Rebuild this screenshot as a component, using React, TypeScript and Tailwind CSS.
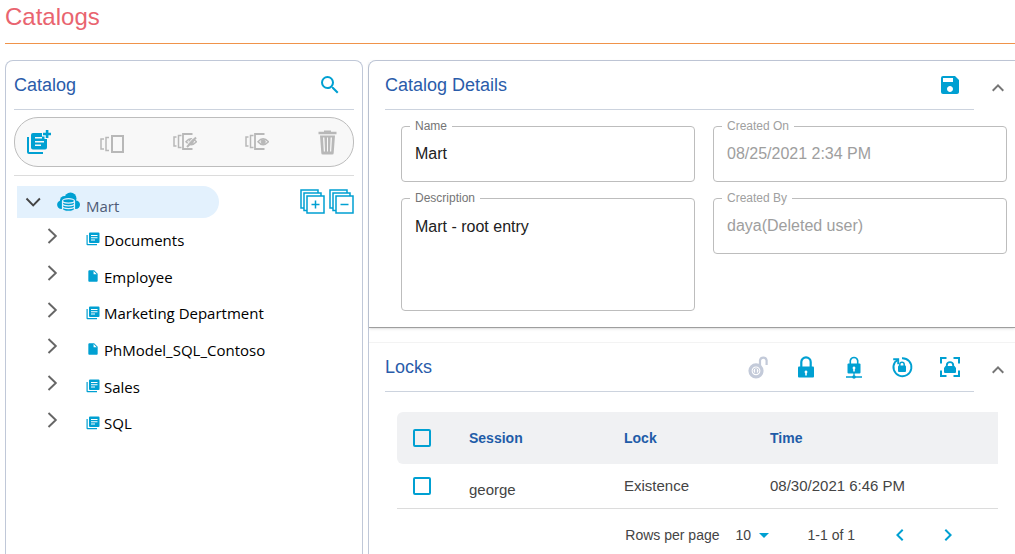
import React, { useState } from "react";
import { MdSearch, MdSave, MdExpandLess, MdArrowDropDown, MdChevronLeft, MdChevronRight, MdInsertDriveFile } from "react-icons/md";

function AddCatalogIcon() {
  return (
    <svg width="24" height="24" viewBox="0 0 24 24" fill="currentColor" aria-hidden="true">
      <path d="M0 7h2v15h14v2H2a2 2 0 0 1-2-2z" />
      <path fillRule="evenodd" d="M6 3h9v3.500h2.500V9H20v8.500a2 2 0 0 1-2 2H6a2 2 0 0 1-2-2V5a2 2 0 0 1 2-2zM8 7v1.500h7V7zM8 11v1.500h9V11zM8 14.500V16h6v-1.500z" />
      <path d="M18.800 0h2.600v2.700H24v2.600h-2.600V8h-2.600V5.300H16V2.700h2.800z" />
    </svg>
  );
}

function VersionIcon({ kind }: { kind: "plain" | "hidden" | "shown" }) {
  return (
    <svg width="24" height="18" viewBox="0 0 24 18" fill="none" stroke="currentColor" aria-hidden="true">
      {kind === "plain" ? (
        <>
          <path d="M4 4H1v10h3M9 2.500H6v13h3" strokeWidth="1.500" />
          <path d="M12 1h11v16H12z" strokeWidth="2" />
        </>
      ) : (
        <>
          <path d="M3.500 4H1v9h2.500M8.500 2.500h-3v12h3" strokeWidth="1.500" />
          <path d="M19.500 1H10v15h9.500" strokeWidth="1.800" />
          <path d="M13 8.800q5-6 10.500 0-5.500 6-10.500 0z" strokeWidth="1.500" />
          <circle cx="18.200" cy="8.800" r="2.100" fill="currentColor" />
          {kind === "hidden" && (
            <>
              <path d="M14 14l9-9.500" strokeWidth="2" />
              <path d="M13.300 12.300l8-8.500" stroke="#f8f8f8" strokeWidth="1" />
            </>
          )}
        </>
      )}
    </svg>
  );
}

function TrashIcon() {
  return (
    <svg width="19" height="25" viewBox="0 0 19 25" fill="currentColor" aria-hidden="true">
      <path d="M6 0.500h7v1.200h5.500v2.600H0.500V1.700H6z" />
      <path fillRule="evenodd" d="M2 5.500h15l-1.300 17.500a1.500 1.500 0 0 1-1.500 1.500H4.800A1.500 1.500 0 0 1 3.300 23zM5 7.500l.8 14h1.200l-.6-14zM9 7.500v14h1v-14zM12.600 7.500l-.6 14h1.200l.8-14z" />
    </svg>
  );
}

function CloudDbIcon() {
  return (
    <svg width="23" height="20" viewBox="0 0 23 20" aria-hidden="true">
      <g fill="#00a0d2">
        <circle cx="4.300" cy="12.800" r="4.200" />
        <circle cx="7.500" cy="8.500" r="4.500" />
        <circle cx="13.500" cy="6.500" r="6" />
        <circle cx="18.800" cy="12.800" r="4.200" />
        <path d="M4 8h15v9H4z" />
      </g>
      <path d="M5.500 9v8c0 3.200 12 3.200 12 0V9c0-3.200-12-3.200-12 0z" fill="#00a0d2" stroke="#e3f1fd" strokeWidth="1.200" />
      <path d="M5.500 9c0 2.700 12 2.700 12 0M5.500 11.800c0 2.700 12 2.700 12 0M5.500 14.600c0 2.700 12 2.700 12 0" fill="none" stroke="#e3f1fd" strokeWidth="1.200" />
    </svg>
  );
}

function FolderIcon() {
  return (
    <svg width="14" height="14" viewBox="0 0 14 14" fill="currentColor" aria-hidden="true">
      <path d="M0.500 3h1.200v9h9.300v1.300H1.500a1 1 0 0 1-1-1z" />
      <path fillRule="evenodd" d="M4 0.500h8.500a1 1 0 0 1 1 1V10a1 1 0 0 1-1 1H4a1 1 0 0 1-1-1V1.500a1 1 0 0 1 1-1zM5 3v1h6.500V3zM5 5.200v1h6.500v-1zM5 7.500v1h4v-1z" />
    </svg>
  );
}

function StackIcon({ minus }: { minus?: boolean }) {
  return (
    <svg width="25" height="25" viewBox="0 0 25 25" fill="none" stroke="currentColor" strokeWidth="1.500" aria-hidden="true">
      <path d="M4 19H1V1h17v3" />
      <path d="M7 21.500H4V4h17v3" />
      <path d="M7 7h17v17H7z" />
      <path d={minus ? "M11.500 15.500h8" : "M11.500 15.500h8M15.500 11.500v8"} />
    </svg>
  );
}

function Chevron({ down }: { down?: boolean }) {
  return (
    <svg width="16" height="16" viewBox="0 0 16 16" fill="none" stroke={down ? "#444" : "#666"} strokeWidth="1.900" aria-hidden="true">
      <path d={down ? "M1.500 4.500l6.700 7 6.700-7" : "M4.500 1l7.300 7-7.300 7"} />
    </svg>
  );
}

function OpenLockIcon() {
  return (
    <svg width="24" height="24" viewBox="0 0 24 24" fill="none" stroke="currentColor" aria-hidden="true">
      <circle cx="10" cy="15.800" r="6" strokeWidth="3.200" />
      <circle cx="10" cy="15.800" r="2.900" strokeWidth="1" />
      <path d="M10 14v4" strokeWidth="1.800" />
      <path d="M14 11V5.200a3.400 3.400 0 0 1 6.600 0V10" strokeWidth="2.200" />
    </svg>
  );
}

function LockIcon() {
  return (
    <svg width="24" height="24" viewBox="0 0 24 24" aria-hidden="true">
      <path d="M7.300 12V7a4.700 4.700 0 0 1 9.400 0v5" fill="none" stroke="currentColor" strokeWidth="2.200" />
      <path d="M5 11.500h14a1 1 0 0 1 1 1v9a1 1 0 0 1-1 1H5a1 1 0 0 1-1-1v-9a1 1 0 0 1 1-1z" fill="currentColor" />
      <path d="M12 15.500a1.500 1.500 0 0 1 .8 2.700v2.300h-1.600v-2.300a1.500 1.500 0 0 1 .8-2.700z" fill="#fff" />
    </svg>
  );
}

function NetworkLockIcon() {
  return (
    <svg width="24" height="24" viewBox="0 0 24 24" aria-hidden="true">
      <path d="M8.300 9V5.500a3.800 3.800 0 0 1 7.400 0V9" fill="none" stroke="currentColor" strokeWidth="1.600" />
      <rect x="5.500" y="8.500" width="13" height="10" rx="1" fill="currentColor" />
      <path d="M12 11.500a1.500 1.500 0 0 1 .8 2.700v2.300h-1.600v-2.300a1.500 1.500 0 0 1 .8-2.700z" fill="#fff" />
      <path d="M4 22h16M12 18v3" stroke="currentColor" strokeWidth="1.300" />
      <circle cx="12" cy="22" r="1.800" fill="currentColor" />
    </svg>
  );
}

function RefreshLockIcon() {
  return (
    <svg width="24" height="24" viewBox="0 0 24 24" aria-hidden="true">
      <path d="M12 3.200a9 9 0 1 1-7.200 4.200L7.500 5" fill="none" stroke="currentColor" strokeWidth="1.900" />
      <path d="M3.200 4.200h5v5" fill="none" stroke="currentColor" strokeWidth="1.900" />
      <rect x="8" y="10.500" width="8" height="6.500" rx="1" fill="currentColor" />
      <path d="M9.800 11V9.500a2.200 2.200 0 0 1 4.400 0V11" fill="none" stroke="currentColor" strokeWidth="1.500" />
    </svg>
  );
}

function FrameLockIcon() {
  return (
    <svg width="24" height="24" viewBox="0 0 24 24" aria-hidden="true">
      <path d="M3 8.500V3h5.500M15.500 3H21v5.500M21 15.500V21h-5.500M8.500 21H3v-5.500" fill="none" stroke="currentColor" strokeWidth="2" />
      <path d="M7.500 11h9l1.500 2v4a1 1 0 0 1-1 1H7a1 1 0 0 1-1-1v-4z" fill="currentColor" />
      <path d="M8.800 12v-1.700a3.200 3.200 0 0 1 6.400 0V12" fill="none" stroke="currentColor" strokeWidth="1.900" />
    </svg>
  );
}

const tree = [
  { name: "Documents", folder: true },
  { name: "Employee", folder: false },
  { name: "Marketing Department", folder: true },
  { name: "PhModel_SQL_Contoso", folder: false },
  { name: "Sales", folder: true },
  { name: "SQL", folder: true },
];

type FieldProps = { id: string; label: string; value: string; disabled?: boolean; multiline?: boolean };

function Field({ id, label, value, disabled, multiline }: FieldProps) {
  return (
    <div className={`relative rounded border border-[#bdbdbd] ${multiline ? "row-span-2" : ""}`}>
      <label htmlFor={id} className={`absolute -top-[9px] left-2 bg-white px-[5px] text-xs leading-4 ${disabled ? "text-[#a0a0a0]" : "text-[#757575]"}`}>
        {label}
      </label>
      {multiline ? (
        <textarea id={id} defaultValue={value} className="block h-[111px] w-full resize-none bg-transparent px-[13px] pt-[18px] text-base leading-5 text-[#212121] outline-none" />
      ) : (
        <input id={id} defaultValue={value} disabled={disabled} className={`block h-[54px] w-full bg-transparent px-[13px] text-base outline-none ${disabled ? "text-[#9e9e9e]" : "text-[#212121]"}`} />
      )}
    </div>
  );
}

function CheckBox({ label }: { label: string }) {
  return <input type="checkbox" aria-label={label} className="block size-[18px] appearance-none rounded-xs border-2 border-[#00a0d2] checked:bg-[#00a0d2]" />;
}

type SectionHeadProps = { title: string; open: boolean; onToggle: () => void; children: React.ReactNode };

function SectionHead({ title, open, onToggle, children }: SectionHeadProps) {
  return (
    <div className="flex items-center pr-[5px] pl-4">
      <div className="flex h-[49px] flex-1 items-center justify-between border-b border-[#ccd3de]">
        <h2 className="text-lg text-[#2a5caa]">{title}</h2>
        <div className="flex gap-6 pr-3 text-[#00a0d2]">{children}</div>
      </div>
      <button aria-label={`Toggle ${title}`} aria-expanded={open} onClick={onToggle} className="ml-3 pt-1 text-[#757575]">
        <MdExpandLess size={24} />
      </button>
    </div>
  );
}

export default function App() {
  const [details, setDetails] = useState(true);
  const [locks, setLocks] = useState(true);
  return (
    <div className="flex min-h-screen flex-col bg-white pl-[5px] font-['Liberation_Sans',Arial,sans-serif]">
      <h1 className="flex h-11 items-start border-b border-[#f0934a] text-2xl leading-[34px] text-[#e9646f]">Catalogs</h1>
      <main className="mt-4 flex flex-1 gap-[5px]">
        <section className="w-[358px] shrink-0 rounded-t-lg border border-b-0 border-[#c0c8d8] px-2">
          <div className="flex h-[49px] items-center justify-between border-b border-[#ccd3de] pr-3">
            <h2 className="text-lg text-[#2a5caa]">Catalog</h2>
            <button aria-label="Search" className="text-[#00a0d2]"><MdSearch size={24} /></button>
          </div>
          <div className="mt-[7px] flex h-[50px] items-center justify-between rounded-3xl border border-[#bdbdbd] bg-[#f8f8f8] pr-4 pl-3 text-[#b8b8b8]">
            <button aria-label="New catalog" className="text-[#00a0d2]"><AddCatalogIcon /></button>
            <button aria-label="Versions" className="pt-1"><VersionIcon kind="plain" /></button>
            <button aria-label="Hide versions"><VersionIcon kind="hidden" /></button>
            <button aria-label="Show versions"><VersionIcon kind="shown" /></button>
            <button aria-label="Delete"><TrashIcon /></button>
          </div>
          <div className="mt-2 flex items-start justify-between border-t border-[#dcdcdc] pt-2.5 pl-[3px] font-['Open_Sans','Noto_Sans',sans-serif]">
            <div className="flex h-8 w-[202px] items-center rounded-r-full bg-[#e3f1fd] pl-2">
              <button aria-label="Collapse Mart"><Chevron down /></button>
              <span className="ml-4 flex items-center gap-1.5">
                <CloudDbIcon />
                <span className="pt-2 text-[15px] leading-6 text-[#4f5b76]">Mart</span>
              </span>
            </div>
            <div className="flex gap-1 pt-[3px] text-[#00a0d2]">
              <button aria-label="Expand all"><StackIcon /></button>
              <button aria-label="Collapse all"><StackIcon minus /></button>
            </div>
          </div>
          <ul className="grid h-[224px] grid-rows-6 pt-1 pl-[30px] font-['Open_Sans','Noto_Sans',sans-serif] text-[15px] text-black">
            {tree.map((n) => (
              <li key={n.name} className="flex items-center">
                <button aria-label={`Expand ${n.name}`} className="pb-2"><Chevron /></button>
                <span className="ml-[26px] flex items-center gap-1">
                  <span className="flex w-3.5 justify-center pb-0.5 text-[#00a0d2]">
                    {n.folder ? <FolderIcon /> : <MdInsertDriveFile size={14} />}
                  </span>
                  {n.name}
                </span>
              </li>
            ))}
          </ul>
        </section>

        <div className="min-w-0 flex-1 rounded-tl-lg border-t border-l border-[#c0c8d8]">
          <section className="border-b border-[#9e9e9e] pb-4 shadow-sm">
            <SectionHead title="Catalog Details" open={details} onToggle={() => setDetails(!details)}>
              <button aria-label="Save"><MdSave size={24} /></button>
            </SectionHead>
            {details && (
              <div className="grid grid-cols-2 items-start gap-x-[18px] gap-y-4 pt-4 pr-2 pl-8">
                <Field id="name" label="Name" value="Mart" />
                <Field id="created-on" label="Created On" value="08/25/2021 2:34 PM" disabled />
                <Field id="description" label="Description" value="Mart - root entry" multiline />
                <Field id="created-by" label="Created By" value="daya(Deleted user)" disabled />
              </div>
            )}
          </section>

          <section className="mt-3.5 border-t border-[#f3f3f3]">
            <SectionHead title="Locks" open={locks} onToggle={() => setLocks(!locks)}>
              <button aria-label="Unlock" className="text-[#c3cad9]"><OpenLockIcon /></button>
              <button aria-label="Existence lock"><LockIcon /></button>
              <button aria-label="Shared lock"><NetworkLockIcon /></button>
              <button aria-label="Refresh locks"><RefreshLockIcon /></button>
              <button aria-label="Exclusive lock"><FrameLockIcon /></button>
            </SectionHead>
            {locks && (
              <div className="pt-5 pr-[17px] pl-7 text-[#444]">
                <table className="w-full table-fixed border-collapse text-left text-[15px]">
                  <thead>
                    <tr className="h-[52px] text-sm text-[#1f5ca8]">
                      <th className="w-[72px] rounded-l-md bg-[#f0f1f3] pl-4"><CheckBox label="Select all" /></th>
                      <th className="w-[155px] bg-[#f0f1f3]">Session</th>
                      <th className="w-[146px] bg-[#f0f1f3]">Lock</th>
                      <th className="bg-[#f0f1f3]">Time</th>
                    </tr>
                  </thead>
                  <tbody>
                    <tr className="h-11 border-b border-[#dcdcdc]">
                      <td className="pl-4"><CheckBox label="Select george" /></td>
                      <td className="pt-2">george</td>
                      <td>Existence</td>
                      <td>08/30/2021 6:46 PM</td>
                    </tr>
                  </tbody>
                </table>
                <div className="flex h-[45px] items-center justify-end pt-2 pr-[38px] text-sm">
                  <label htmlFor="rows">Rows per page</label>
                  <span className="relative ml-4 flex items-center">
                    <select id="rows" defaultValue="10" className="w-9 appearance-none bg-transparent outline-none">
                      <option>10</option>
                      <option>25</option>
                    </select>
                    <MdArrowDropDown size={24} className="pointer-events-none absolute left-4 text-[#00a0d2]" />
                  </span>
                  <span className="ml-9">1-1 of 1</span>
                  <button aria-label="Previous page" className="ml-[33px] text-[#00a0d2]"><MdChevronLeft size={24} /></button>
                  <button aria-label="Next page" className="ml-6 text-[#00a0d2]"><MdChevronRight size={24} /></button>
                </div>
              </div>
            )}
          </section>
        </div>
      </main>
    </div>
  );
}
